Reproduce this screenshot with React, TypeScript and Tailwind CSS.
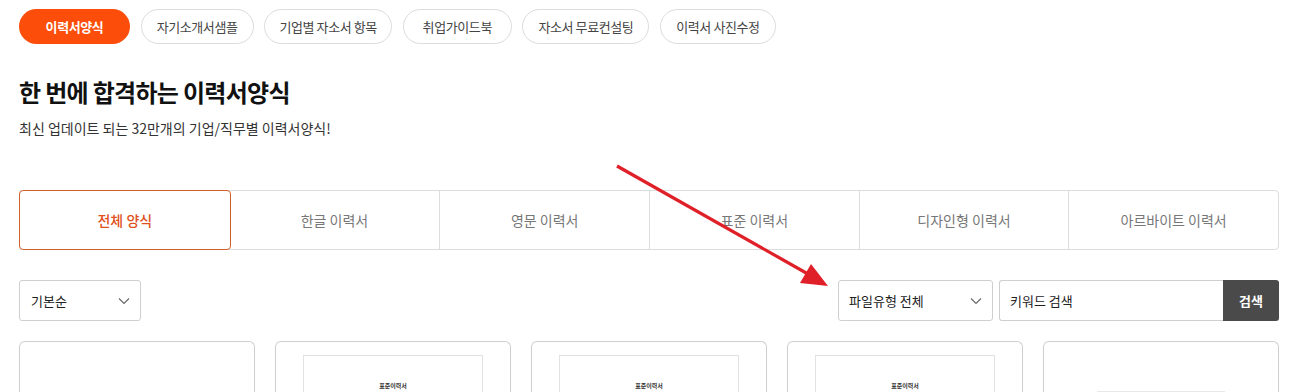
import React from "react";

const font = { fontFamily: '"Noto Sans CJK KR", "Noto Sans", sans-serif' };

const pills = [
  { t: "이력서양식", w: "w-[111px]" },
  { t: "자기소개서샘플", w: "w-[113px]" },
  { t: "기업별 자소서 항목", w: "w-[128px]" },
  { t: "취업가이드북", w: "w-[109px]" },
  { t: "자소서 무료컨설팅", w: "w-[127px]" },
  { t: "이력서 사진수정", w: "w-[116px]" },
];
const tabs = ["전체 양식", "한글 이력서", "영문 이력서", "표준 이력서", "디자인형 이력서", "아르바이트 이력서"];

function Chevron() {
  return (
    <svg width="12" height="8" viewBox="0 0 12 8" fill="none">
      <path d="M1 1.5L6 6.5L11 1.5" stroke="#666" strokeWidth="1.1" />
    </svg>
  );
}

function Card({ kind }: { kind: "empty" | "paper" | "low" }) {
  return (
    <div className="h-[60px] rounded-t-[6px] border border-b-0 border-[#cfcfcf] flex justify-center overflow-hidden">
      {kind === "paper" && (
        <div className="mt-[13px] w-[180px] h-[60px] border border-b-0 border-[#e2e2e2] flex justify-center">
          <span className="mt-[27px] text-[6px] font-bold text-[#333] leading-none">표준이력서</span>
        </div>
      )}
      {kind === "low" && <div className="mt-[49px] w-[128px] h-[20px] border-t border-[#e8e8e8]" />}
    </div>
  );
}

export default function App() {
  return (
    <div className="relative w-[1305px] h-[392px] overflow-hidden bg-white" style={font}>
      <div className="ml-[19px] w-[1260px] pt-[9px]">
        <div className="flex gap-[10.6px]">
          {pills.map((p, i) => (
            <div
              key={p.t}
              className={
                i === 0
                  ? `${p.w} h-[35px] rounded-full bg-[#fc4d0a] text-white text-[13px] font-bold flex items-center justify-center tracking-[-0.4px]`
                  : `${p.w} h-[35px] rounded-full border border-[#dcdcdc] text-[#444] text-[13px] flex items-center justify-center tracking-[-0.4px]`
              }
            >
              {p.t}
            </div>
          ))}
        </div>
        <h1 className="mt-[32px] text-[24px] font-bold text-[#111] leading-[32px] tracking-[-0.7px]">한 번에 합격하는 이력서양식</h1>
        <p className="mt-[10px] text-[14px] text-[#333] leading-[20px]">최신 업데이트 되는 32만개의 기업/직무별 이력서양식!</p>
        <div className="mt-[52px] grid grid-cols-6 h-[60px] border border-[#dcdcdc] rounded-[4px]">
          {tabs.map((t, i) => (
            <div
              key={t}
              className={
                i === 0
                  ? "-m-px border border-[#d0602c] rounded-[4px] flex items-center justify-center text-[14px] font-medium text-[#e0501c] relative"
                  : i === 1
                  ? "flex items-center justify-center text-[14px] text-[#777]"
                  : "border-l border-[#dcdcdc] flex items-center justify-center text-[14px] text-[#777]"
              }
            >
              {t}
            </div>
          ))}
        </div>
        <div className="mt-[30px] flex h-[41px]">
          <div className="w-[122px] border border-[#cfcfcf] rounded-[3px] flex items-center justify-between pl-[11px] pr-[10px] text-[13px] text-[#222]">
            기본순 <Chevron />
          </div>
          <div className="flex-1" />
          <div className="w-[155px] border border-[#cfcfcf] rounded-[3px] flex items-center justify-between pl-[10px] pr-[10px] text-[13px] text-[#222]">
            파일유형 전체 <Chevron />
          </div>
          <div className="ml-[6px] w-[224px] border border-[#cfcfcf] border-r-0 rounded-l-[3px] flex items-center pl-[10px] text-[13px] text-[#222]">
            키워드 검색
          </div>
          <div className="w-[56px] bg-[#4a4a4a] rounded-r-[3px] flex items-center justify-center text-white text-[13px] font-bold">검색</div>
        </div>
        <div className="mt-[20px] grid grid-cols-5 gap-[20px]">
          <Card kind="empty" />
          <Card kind="paper" />
          <Card kind="paper" />
          <Card kind="paper" />
          <Card kind="low" />
        </div>
      </div>
      <svg className="absolute left-0 top-0 pointer-events-none" width="1305" height="392">
        <line x1="617" y1="166" x2="808" y2="274" stroke="#e02028" strokeWidth="3.2" />
        <polygon points="828,286 800,283 811,264" fill="#e02028" />
      </svg>
    </div>
  );
}
